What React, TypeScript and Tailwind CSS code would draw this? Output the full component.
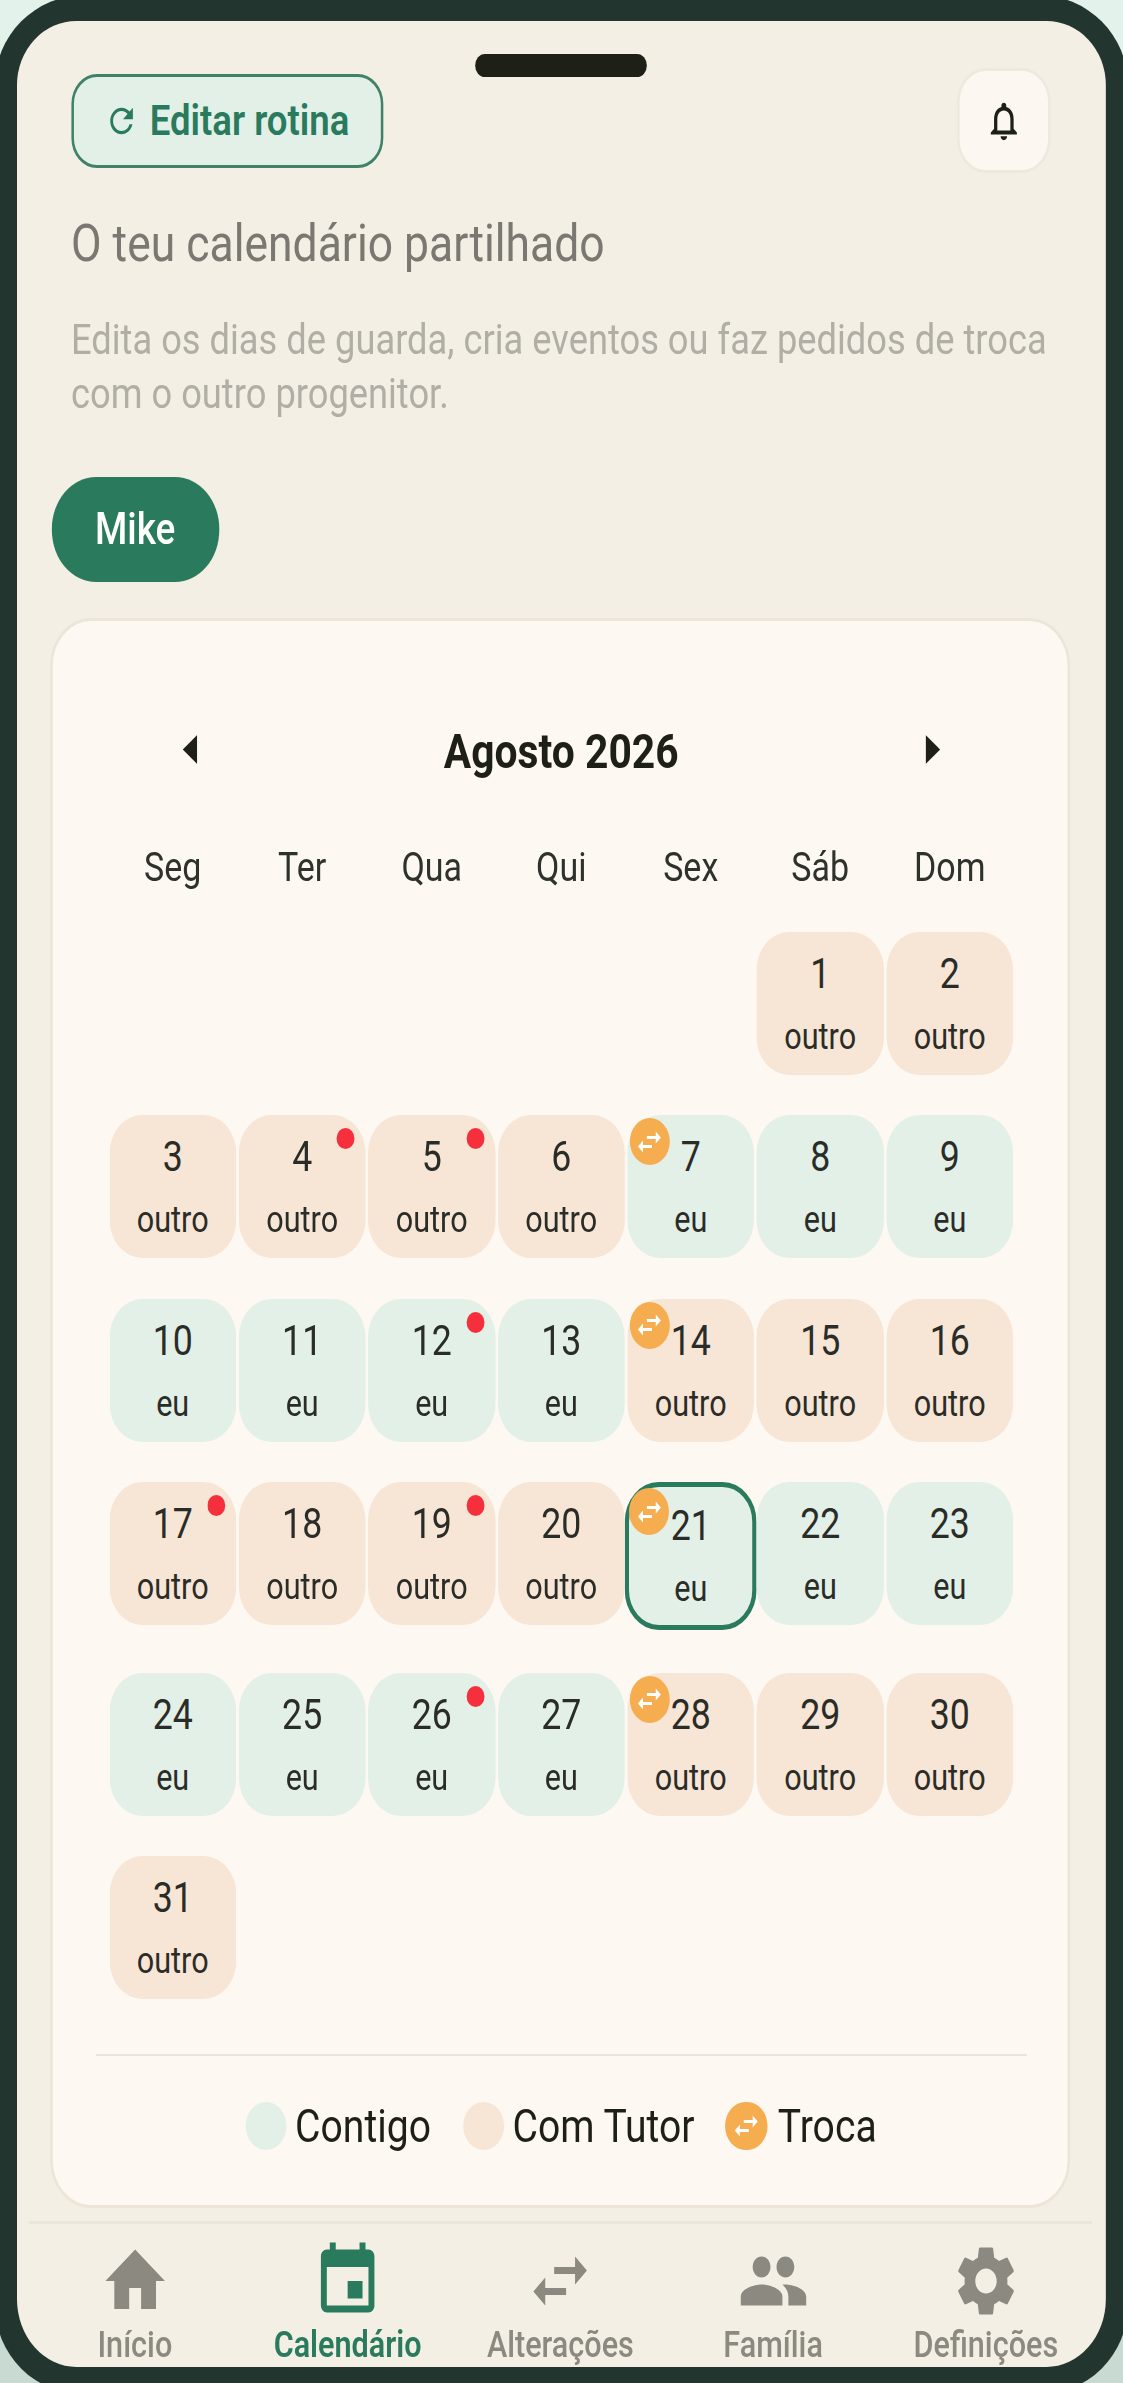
import React from "react";
import { MdHome, MdEvent, MdSwapHoriz, MdPeople, MdSettings, MdRefresh, MdNotificationsNone } from "react-icons/md";

type Day = { n: number; who: "eu" | "outro"; dot?: boolean; swap?: boolean; today?: boolean };

const otro = [1, 2, 3, 4, 5, 6, 14, 15, 16, 17, 18, 19, 20, 28, 29, 30, 31];
const dots = [4, 5, 12, 17, 19, 26];
const swaps = [7, 14, 21, 28];
const days: Day[] = Array.from({ length: 31 }, (_, i) => {
  const n = i + 1;
  return { n, who: otro.includes(n) ? "outro" : "eu", dot: dots.includes(n), swap: swaps.includes(n), today: n === 21 };
});

function Cell({ d }: { d: Day }) {
  return (
    <div
      className={`relative flex flex-col items-center text-[#2a2c27] ${d.who === "eu" ? "bg-[#e3f0e7]" : "bg-[#f7e5d6]"} ${
        d.today ? "-mx-[2.5px] h-[148px] mb-[2px] rounded-[40px] border-[5px] border-[#2a7a5e] pt-[14px]" : "h-[143px] rounded-[38px] pt-[17px]"
      }`}
    >
      {d.dot && <span className="absolute top-[13px] right-[13px] w-[21px] h-[21px] rounded-full bg-[#f5303c]" />}
      {d.swap && (
        <span className={`absolute flex items-center justify-center w-[47px] h-[47px] rounded-full bg-[#f6ad4f] text-white ${d.today ? "top-px left-0" : "top-[3px] left-[3px]"}`}>
          <MdSwapHoriz size={36} />
        </span>
      )}
      <span className="text-[42px] leading-[50px]">{d.n}</span>
      <span className="mt-4 text-[36px] leading-[44px]">{d.who}</span>
    </div>
  );
}

const nav = [
  { label: "Início", Icon: MdHome },
  { label: "Calendário", Icon: MdEvent, active: true },
  { label: "Alterações", Icon: MdSwapHoriz },
  { label: "Família", Icon: MdPeople },
  { label: "Definições", Icon: MdSettings },
];

export default function App() {
  return (
    <div className="w-[1123px] h-[2383px] overflow-hidden bg-gradient-to-b from-[#e3f2ea] to-[#c9dad2] font-['Roboto',sans-serif]">
      <div className="w-[1321px] origin-top-left scale-x-[0.85]">
        <div className="-mx-[6px] -mt-[5px] h-[2400px] rounded-[106px/90px] bg-[#22352f] pl-[25.5px] pr-[26px] pt-[26px] pb-[28px]">
          <div className="relative flex flex-col h-full overflow-hidden rounded-t-[70px_64px] rounded-b-[70px_68px] bg-[#f3efe4]">
            <span className="absolute top-[33px] left-[539px] w-[202px] h-[23px] rounded-full bg-[#1e2018]" />

            <div className="flex items-center justify-between pl-[64px] pr-[65px] pt-[47px]">
              <button className="flex items-center justify-center gap-[13px] w-[367px] h-[94px] rounded-[30px] border-[3px] border-[#3f8268] bg-[#e2f0e8] text-[#2a7a5e] text-[43px] font-semibold">
                <MdRefresh size={40} />
                Editar rotina
              </button>
              <div className="flex items-center justify-center w-[110px] h-[105px] rounded-[34px] border-[3px] border-[#eee9dd] bg-[#fcf8f1] text-[#1e2018]">
                <MdNotificationsNone size={46} />
              </div>
            </div>

            <h1 className="mt-[39.5px] pl-[64px] text-[52.3px] leading-[60px] font-normal text-[#7a7870]">O teu calendário partilhado</h1>
            <p className="mt-[39.5px] pl-[64px] pr-[40px] text-[42.7px] leading-[54px] text-[#b0aea5]">
              Edita os dias de guarda, cria eventos ou faz pedidos de troca com o outro progenitor.
            </p>

            <div className="mt-[57px] ml-[41px] flex items-center justify-center w-[197px] h-[105px] rounded-[52px] bg-[#2a7a5e] text-white text-[43.5px] font-medium">Mike</div>

            <div className="mt-[36px] ml-[39px] mr-[42px] h-[1590px] rounded-[48px] border-[3px] border-[#ece5d8] bg-[#fdf9f2] pl-[51px] pr-[48px] pt-[101px]">
              <div className="flex items-center justify-between h-[60px] px-[61px] text-[#1e2018]">
                <span className="flex justify-center w-[100px] -mt-[6px]">
                  <svg width="17" height="29" viewBox="0 0 17 29" fill="currentColor"><path d="M17 0 L0 14.5 L17 29Z" /></svg>
                </span>
                <span className="text-[48px] font-bold">Agosto 2026</span>
                <span className="flex justify-center w-[100px] -mt-[6px]">
                  <svg width="17" height="29" viewBox="0 0 17 29" fill="currentColor"><path d="M0 0 L17 14.5 L0 29Z" /></svg>
                </span>
              </div>

              <div className="mx-4 mt-[62px] grid grid-cols-7 gap-x-[3px] text-center text-[40px] leading-[48px] text-[#2f312c]">
                {["Seg", "Ter", "Qua", "Qui", "Sex", "Sáb", "Dom"].map((w) => (
                  <span key={w}>{w}</span>
                ))}
              </div>

              <div className="mx-4 mt-[39.5px] grid grid-cols-7 gap-x-[3px] gap-y-[40.5px] items-start">
                {Array.from({ length: 5 }).map((_, i) => (
                  <div key={i} />
                ))}
                {days.map((d) => (
                  <Cell key={d.n} d={d} />
                ))}
              </div>

              <div className="mt-[54.5px] h-[2px] bg-[#e9e5da]" />

              <div className="mt-[46px] flex items-center justify-center text-[46px] leading-[48px] text-[#1e2018]">
                <span className="w-[48px] h-[48px] rounded-full bg-[#e3f0e7]" />
                <span className="ml-[10px]">Contigo</span>
                <span className="ml-[38px] w-[48px] h-[48px] rounded-full bg-[#f7e5d6]" />
                <span className="ml-[10px]">Com Tutor</span>
                <span className="ml-[36px] flex items-center justify-center w-[50px] h-[48px] rounded-full bg-[#f6ad4f] text-white">
                  <MdSwapHoriz size={36} />
                </span>
                <span className="ml-[12px]">Troca</span>
              </div>
            </div>

            <div className="mt-[13px] ml-[14px] mr-[16px] border-t-[3px] border-[#e9e6da] grid grid-cols-5 pt-[15px]">
              {nav.map(({ label, Icon, active }) => (
                <div key={label} className={`flex flex-col items-center ${active ? "text-[#2a7a5e]" : "text-[#8b8980]"}`}>
                  <Icon size={84} />
                  <span className={`text-[36px] leading-[44px] ${active ? "font-semibold" : "font-medium"}`}>{label}</span>
                </div>
              ))}
            </div>
          </div>
        </div>
      </div>
    </div>
  );
}
